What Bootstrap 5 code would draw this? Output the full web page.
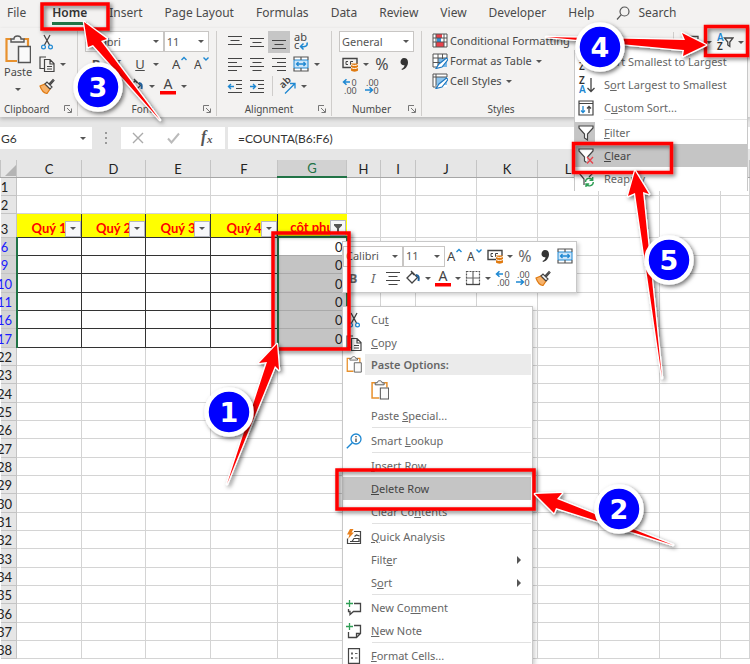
<!DOCTYPE html>
<html lang="en">
<head>
<meta charset="utf-8">
<meta name="viewport" content="width=device-width, initial-scale=1">
<title>Spreadsheet – delete filtered rows</title>
<link href="https://cdn.jsdelivr.net/npm/bootstrap@5.3.0/dist/css/bootstrap.min.css" rel="stylesheet">
<style>
  body { font-family: "Noto Sans", "Open Sans", sans-serif; font-size: 11px; line-height: 16px; color: #4a4a4a; background: #fff; }
  .app { min-height: 100vh; overflow: hidden; }
  svg { display: block; fill: none; flex: none; }
  button { font: inherit; color: inherit; background: none; border: 0; padding: 0; }

  /* ribbon */
  .ribbon { background: #f3f2f1; }
  .tabs { height: 28px; gap: 22px; padding: 0 7px; font-size: 12px; }
  .tabs a { color: #4a4a4a; text-decoration: none; line-height: 20px; padding-top: 3px; }
  .tabs a.active { font-weight: 600; color: #333; border-bottom: 3px solid #217346; line-height: 19px; }
  .groups { height: 89px; padding-top: 3px; box-shadow: 0 2px 4px #00000038; }
  .grp { border-right: 1px solid #cfcdcb; padding: 0 7px; margin-bottom: 1px; }
  .grp .line { height: 22px; }
  .grp .cap { margin-top: auto; font-size: 10px; line-height: 14px; }
  .grp .cap.text-center { padding-right: 10px; }
  .g-clip { width: 78px; padding: 0; } .g-font { width: 139px; } .g-align { width: 115px; }
  .g-num { width: 90px; } .g-style { width: 166px; padding-left: 10px; } .g-edit { padding-left: 85px; border: 0; }
  .grp.g-style .line { height: 20px; gap: 2px; }
  .ib { width: 22px; height: 22px; display: flex; align-items: center; justify-content: center; flex: none; }
  .ib.on { background: #c6c6c6; }
  .car { width: 10px; display: flex; justify-content: center; flex: none; }
  .car::after, .fbtn::after { content: ""; border: 3px solid transparent; border-top-color: #555; border-bottom: 0; }
  .vsep { width: 1px; height: 20px; background: #cfcdcb; margin: 0 4px; }
  .combo { --bs-form-select-bg-img: url("data:image/svg+xml,%3Csvg xmlns='http://www.w3.org/2000/svg' viewBox='0 0 6 3'%3E%3Cpath d='M0 0h6L3 3z' fill='%23555'/%3E%3C/svg%3E");
    height: 21px; border-radius: 0; border-color: #c8c6c4; padding: 0 12px 0 2px; font-size: 11px; line-height: 18px;
    background-size: 6px 3px; background-position: right 4px center; color: #555; }
  .letter { font-size: 13px; }
  .dialog { position: absolute; right: 5px; bottom: 3px; }

  /* formula bar */
  .fbar { background: #e6e6e6; padding: 10px 0 11px; font-family: Lato, sans-serif; }
  .fbar > div, .fbar input { background: #fff; height: 22px; border: 0; color: #333; }
  .fbar input { font-size: 12px; }
  .fbar .formula { padding-left: 10px; }
  .namebox { width: 92px; } .namebox input { width: 78px; padding: 0 0 0 1px; }
  .fbar .dots { width: 29px; background: none; color: #999; }
  .fx { width: 104px; margin-right: 3px; }
  .fx button { width: 35px; }

  /* grid */
  .sheet { table-layout: fixed; width: 100%; border-collapse: collapse; font-family: Lato, sans-serif; font-size: 12px; line-height: 16px; color: #222; }
  .sheet td, .sheet th { border: 1px solid #d4d4d4; padding: 0; height: 18px; font-weight: 400; position: relative; vertical-align: bottom; }
  .sheet tbody tr:nth-child(3n) > * { height: 19px; }
  .sheet thead th { background: #e6e6e6; height: 17px; border-top: 0; border-color: #c4c4c4; border-bottom-color: #a6a6a6; text-align: center; font-size: 13px; }
  .sheet thead th.sel { background: #d2d2d2; color: #217346; border-bottom: 2px solid #217346; }
  .sheet tbody th { background: #e6e6e6; text-align: center; padding-right: 8px; border-left: 0; border-color: #c4c4c4; font-size: 13px; white-space: nowrap; }
  .sheet tbody th span { display: block; width: 16px; margin-left: -4px; text-align: center; padding-top: 1px; }
  .sheet tbody th.sel { background: #d4d4d4; color: #1a1aff; border-right: 2px solid #217346; }
  .sheet tr.titles > * { height: 24px !important; }
  .sheet td.ttl { background: #ff0; color: #f00; font-weight: 700; text-align: center; border-color: #333; font-size: 13px; padding-bottom: 1px; white-space: nowrap; }
  .sheet td.ttl.free { border-color: #ff0; }
  .sheet td.box { border-color: #333; }
  .sheet td.val { text-align: right; padding: 1px 3px 0 0; border-color: #a9a9a9; border-left: 2px solid #217346; border-right: 2px solid #217346; background: #c4c4c4; font-size: 13px; }
  .sheet td.val.first { background: #fff; border-top: 2px solid #217346; }
  .fbtn { position: absolute; right: 0; bottom: 0; width: 16px; height: 16px; background: #f7f8fa !important; border: 1px solid #b5b8c0 !important; display: flex; align-items: center; justify-content: center; }
  .fbtn.filtered::after { display: none; }

  /* floating layers */
  .float { position: absolute; background: #fff; border: 1px solid #c8c8c8; box-shadow: 2px 2px 4px #00000030; color: #666; }
  .mini { left: 342px; top: 241px; width: 235px; padding: 3px 0; }
  .mini .ib { width: 20px; }
  .ctx { left: 342px; top: 306px; width: 191px; height: calc(100% - 306px); min-height: 358px; border-bottom: 0; padding: 1px 1px 0 0; overflow: hidden; }
  .sortm { left: 574px; top: 50px; width: 174px; border-width: 0 1px; box-shadow: none; padding-bottom: 1px; }
  .mi { display: flex; align-items: center; height: 23px; width: 100%; text-align: left; }
  .mi .ic { width: 28px; flex: none; padding-left: 3px; }
  .mi.hot { background: #c5c5c5; color: #444; }
  .mi.head { height: 21px; font-weight: 600; }
  .mi.head .ttx { background: #ebebeb; margin-left: -6px; padding-left: 6px; flex: 1; line-height: 21px; }
  .mi.tall { height: 29px; }
  .sortm .mi .ic { width: 29px; }
  .sortm .ic.on { background: #c5c5c5; width: 20px; margin-right: 9px; height: 21px; display: flex; align-items: center; }
  .msep { height: 1px; margin: 0 0 1px 29px; background: #e1e1e1; }
  .sub { margin-left: auto; margin-right: 10px; border: 4px solid transparent; border-left-color: #555; border-right: 0; }

  .notes { position: absolute; left: 0; top: 0; pointer-events: none; }
  .notes text { font: 700 27px "DejaVu Sans", sans-serif; fill: #fff; text-anchor: middle; }
  .arrows { paint-order: stroke; }
</style>
<script src="https://cdn.jsdelivr.net/npm/bootstrap@5.3.0/dist/js/bootstrap.bundle.min.js"></script>
</head>
<body>
<svg width="0" height="0" class="position-absolute" aria-hidden="true">
  <defs>
    <symbol id="cut" viewBox="0 0 16 16"><path d="M5 1l5.500 10M11 1L5.500 11" stroke="#444" stroke-width="1.300"/><circle cx="4.500" cy="13" r="1.900" stroke="#1e88d2" stroke-width="1.200"/><circle cx="11.500" cy="13" r="1.900" stroke="#1e88d2" stroke-width="1.200"/></symbol>
    <symbol id="copy" viewBox="0 0 16 16"><path d="M5 12.500H1V1h6M5.500 3.500h5.500l4 4v8H5.500zM11 3.500V8h4M8 10.500h5M8 13h5" stroke="#444" stroke-width="1.200"/></symbol>
    <symbol id="paste" viewBox="0 0 26 29"><path d="M6 4H1.500v22H12M19 4h4v7" stroke="#e8912d" stroke-width="2.200"/><path d="M6 7V4h3c0-4 7-4 7 0h3v3z" fill="#f3f2f1" stroke="#555" stroke-width="1.400"/><path d="M13.500 11.500h12v16h-12z" fill="#fafafa" stroke="#555" stroke-width="1.500"/></symbol>
    <symbol id="paint" viewBox="0 0 16 16"><path d="M1 8l5-2 5 5-3 4.500c-3-.5-5.500-3-7-7.500z" fill="#f6b26b" stroke="#e07a10" stroke-width="1.200"/><path d="M6 6l2-2 5 5-2 2zM10 6l4-4.500 1 1L11 7" fill="#fff" stroke="#444" stroke-width="1.200"/></symbol>
    <symbol id="atop" viewBox="0 0 16 16"><path d="M1 2.500h14M3.500 6.500h9M1 10.500h14" stroke="#444" stroke-width="1.200"/></symbol>
    <symbol id="amid" viewBox="0 0 16 16"><path d="M1 4.500h14M3.500 8.500h9M1 12.500h14" stroke="#444" stroke-width="1.200"/></symbol>
    <symbol id="abot" viewBox="0 0 16 16"><path d="M1 6.500h14M3.500 10.500h9M1 14.500h14" stroke="#444" stroke-width="1.200"/></symbol>
    <symbol id="left" viewBox="0 0 16 16"><path d="M1 2.500h14M1 6.500h9M1 10.500h14M1 14.500h9" stroke="#444" stroke-width="1.200"/></symbol>
    <symbol id="center" viewBox="0 0 16 16"><path d="M1 2.500h14M3.500 6.500h9M1 10.500h14M3.500 14.500h9" stroke="#444" stroke-width="1.200"/></symbol>
    <symbol id="right" viewBox="0 0 16 16"><path d="M1 2.500h14M6 6.500h9M1 10.500h14M6 14.500h9" stroke="#444" stroke-width="1.200"/></symbol>
    <symbol id="outd" viewBox="0 0 16 16"><path d="M1 2.500h14M9 6.500h6M9 10.500h6M1 14.500h14" stroke="#444" stroke-width="1.200"/><path d="M7 8.500H1.500M4 6L1.500 8.500 4 11" stroke="#1e88d2" stroke-width="1.400"/></symbol>
    <symbol id="ind" viewBox="0 0 16 16"><path d="M1 2.500h14M9 6.500h6M9 10.500h6M1 14.500h14" stroke="#444" stroke-width="1.200"/><path d="M1 8.500h5.500M4 6l2.500 2.500L4 11" stroke="#1e88d2" stroke-width="1.400"/></symbol>
    <symbol id="wrap" viewBox="0 0 16 18"><text x="1" y="8" font-size="11" fill="#444">ab</text><text x="1" y="16" font-size="11" fill="#444">c</text><path d="M14 9.500c1 4-2 4.500-6 4M10.500 10.500L7.500 13.500l3 3" stroke="#1e88d2" stroke-width="1.500"/></symbol>
    <symbol id="merge" viewBox="0 0 16 16"><path d="M1 1h14v14H1z" fill="#fff"/><path d="M1 4h14v8H1z" fill="#cfe6f8" stroke="#1e88d2"/><path d="M1 4V1h14v3M1 12v3h14v-3M8 1v3M8 12v3" stroke="#555" stroke-width="1.200"/><path d="M3.500 8h9M5.500 6l-2 2 2 2M10.500 6l2 2-2 2" stroke="#1e88d2" stroke-width="1.300"/></symbol>
    <symbol id="orient" viewBox="0 0 18 16"><text transform="rotate(-45 4 11)" x="4" y="11" font-size="10" fill="#444" style="font-weight:600">ab</text><path d="M6 15.500L15.500 6M11 5.500h5v5" stroke="#1e88d2" stroke-width="1.300"/></symbol>
    <symbol id="money" viewBox="0 0 17 16"><path d="M1 2.500h14v9H1z" stroke="#444" stroke-width="1.400"/><path d="M6 5.500H4v3h2M11 5.500H8.500v3h2" stroke="#444"/><path d="M9 7.500h7v7c-1 1.500-6 1.500-7 0z" fill="#e07a10"/><path d="M9 8.500c1.500 1.300 5.500 1.300 7 0M9 11.500c1.500 1.300 5.500 1.300 7 0" stroke="#fff"/></symbol>
    <symbol id="comma" viewBox="0 0 10 14"><path d="M5 1c2.500 0 4 1.600 4 4.200C9 9 6.500 12 3 13l-.5-1c2-1 3-2.500 3-3.800C3 8.500 1.500 7 1.500 5S3 1 5 1z" fill="#333"/></symbol>
    <symbol id="dec0" viewBox="0 0 16 16"><path d="M8 4H1.500M4.500 1.200L1.500 4l3 2.800" stroke="#1e88d2" stroke-width="1.500"/><text x="9.500" y="8" font-size="9" fill="#555">0</text><text x="2" y="15.500" font-size="9" fill="#555">.00</text></symbol>
    <symbol id="dec1" viewBox="0 0 16 16"><text x="2" y="8" font-size="9" fill="#555">.00</text><text x="9.500" y="15.500" font-size="9" fill="#555">0</text><path d="M1 12h7M5.500 9.200l3 2.800-3 2.800" stroke="#1e88d2" stroke-width="1.500"/></symbol>
    <symbol id="cf" viewBox="0 0 16 16"><path d="M1 1h14v13H1z" fill="#fff"/><path d="M4 1h6v4H4zM4 9h8v5H4z" fill="#e8414b"/><path d="M5 5h4v4H5z" fill="#2f8fd8"/><path d="M1 1h14v13H1zM4 1v13M12 1v13M1 5h14M1 9h14" stroke="#555"/></symbol>
    <symbol id="ft" viewBox="0 0 16 16"><path d="M1 1h14v13H1z" fill="#fff"/><path d="M6 5h9v9H6z" fill="#7ab8e8"/><path d="M15 1H1v13h4M6 1v13M10.500 1v5M1 5h14M1 9.500h9M15 1v4" stroke="#555"/><path d="M4 15.500l3-4.500 7.500-6 1.500 1.500-6 7.500z" fill="#fff" stroke="#1e78c0" stroke-width="1.200"/></symbol>
    <symbol id="cs" viewBox="0 0 16 16"><path d="M1 1h14v13H1z" fill="#fff"/><path d="M4 4h11v8H4z" fill="#8cc4ee"/><path d="M15 4V1H1v13h4M4 1v12M1 4h14" stroke="#555"/><path d="M4 15.500l3-4.500 7.500-6 1.500 1.500-6 7.500z" fill="#fff" stroke="#1e78c0" stroke-width="1.200"/></symbol>
    <symbol id="bucket" viewBox="0 0 16 16"><path d="M2 8l5.500-5.500 5 5L7 13zM6 1l3 4" stroke="#444" stroke-width="1.300"/><path d="M11 5c3 0 3 3 2.500 6" stroke="#1e5f9a" stroke-width="2"/></symbol>
    <symbol id="fontc" viewBox="0 0 16 18"><text x="8" y="11.500" font-size="14" text-anchor="middle" fill="#444">A</text><path d="M0 14h16v3.500H0z" fill="#f00"/></symbol>
    <symbol id="big" viewBox="0 0 16 16"><text x="0" y="13" font-size="13" fill="#444">A</text><path d="M9.500 4l2.500-2.500L14.500 4" stroke="#1e88d2" stroke-width="1.400"/></symbol>
    <symbol id="small-a" viewBox="0 0 16 16"><text x="0" y="13" font-size="12" fill="#444">A</text><path d="M9.500 1.500L12 4l2.500-2.500" stroke="#1e88d2" stroke-width="1.400"/></symbol>
    <symbol id="bord" viewBox="0 0 16 16"><path d="M1.500 1.500h13v13h-13z" stroke="#555" stroke-width="1.200" stroke-dasharray="2 1"/><path d="M8 1v14M1 8h14" stroke="#666" stroke-width="1.200"/><path d="M1 14.500h14" stroke="#444" stroke-width="1.300"/></symbol>
    <symbol id="launch" viewBox="0 0 8 8"><path d="M.5 6V.5H6M3 3l4 4M7.500 3.500v4h-4" stroke="#777"/></symbol>
    <symbol id="za" viewBox="0 0 18 18"><text x="1" y="8" font-size="10" fill="#333" style="font-weight:600">Z</text><text x="1" y="17" font-size="10" fill="#1e88d2" style="font-weight:600">A</text><path d="M13 2v13M9.500 12l3.500 3.500 3.500-3.500" stroke="#444" stroke-width="1.300"/></symbol>
    <symbol id="az" viewBox="0 0 18 18"><text x="1" y="8" font-size="10" fill="#1e88d2" style="font-weight:600">A</text><text x="1" y="17" font-size="10" fill="#333" style="font-weight:600">Z</text><path d="M13 2v13M9.500 12l3.500 3.500 3.500-3.500" stroke="#444" stroke-width="1.300"/></symbol>
    <symbol id="azf" viewBox="0 0 18 18"><text x="1" y="8" font-size="10" fill="#1e88d2" style="font-weight:600">A</text><text x="1" y="17" font-size="10" fill="#333" style="font-weight:600">Z</text><path d="M8.500 5h8.500l-3.200 4v4.500l-2-1.500V9z" stroke="#444" stroke-width="1.300"/></symbol>
    <symbol id="csort" viewBox="0 0 16 16"><path d="M1 1h14v14H1zM1 3.500h14" stroke="#444" stroke-width="1.200"/><path d="M5 6v6.500M3 10.500l2 2 2-2" stroke="#1e88d2" stroke-width="1.300"/><path d="M11 13V6.500M9 8.500l2-2 2 2" stroke="#444" stroke-width="1.300"/></symbol>
    <symbol id="funnel" viewBox="0 0 16 16"><path d="M1 1h14v2L9.500 9v6l-3-2V9L1 3z" fill="#fff" stroke="#444" stroke-width="1.200"/></symbol>
    <symbol id="fclear" viewBox="0 0 16 16"><path d="M9.500 9L15 3V1H1v2l5.500 6v4l2 1.500" fill="#fff" stroke="#444" stroke-width="1.200"/><path d="M9 9l6 6.500M15 9l-6 6.500" stroke="#e8414b" stroke-width="1.300"/></symbol>
    <symbol id="freap" viewBox="0 0 16 16"><path d="M11 6l4-4V1H1v1l5 6v6" stroke="#444" stroke-width="1.200"/><path d="M7.500 11c0-4 5-5 7-2M14.700 6v3.300h-3.200M15.300 11c0 4-5 5-7 2.500M8 16.500V13h3.200" stroke="#2f9e55" stroke-width="1.400"/></symbol>
    <symbol id="look" viewBox="0 0 16 16"><circle cx="10" cy="6" r="5" stroke="#1e88d2" stroke-width="1.300"/><path d="M6.300 9.700L.8 15.200" stroke="#1e88d2" stroke-width="1.400"/><path d="M10 5.500V9M10 3v1.200" stroke="#444" stroke-width="1.300"/></symbol>
    <symbol id="quick" viewBox="0 0 16 16"><path d="M8 2.500h6.500v12h-13v-5M4 12.500h9v-3H8l-2 3M8.500 7.500l2-1.500 3 1" stroke="#444" stroke-width="1.200"/><path d="M4 0h3.500L5.500 3.500H8L2 10l1.500-4.500H1z" fill="#e8801d"/></symbol>
    <symbol id="comm" viewBox="0 0 16 16"><path d="M8 3.500h6.500v8H7.500L4 14.500v-3H2.500V9" stroke="#444" stroke-width="1.300"/><path d="M3.500 0v7M0 3.500h7" stroke="#2f9e55" stroke-width="1.300"/></symbol>
    <symbol id="note" viewBox="0 0 16 16"><path d="M8 2.500h6.500v8l-4 4h-8V9M14.500 10.500h-4v4" stroke="#444" stroke-width="1.300"/><path d="M3.500 0v7M0 3.500h7" stroke="#2f9e55" stroke-width="1.300"/></symbol>
    <symbol id="fmt" viewBox="0 0 16 16"><path d="M2.500.7h11v14.600h-11z" stroke="#444" stroke-width="1.200"/><path d="M5 4.500h2v2H5zM5 9h2v2H5z" fill="#666"/><path d="M9 5.500h2.500M9 10h2.500" stroke="#666" stroke-width="1.200"/></symbol>
  </defs>
</svg>

<main class="app position-relative">
  <header class="ribbon">
    <nav class="tabs d-flex align-items-start text-nowrap" aria-label="Ribbon tabs">
      <a href="#" class="me-1">File</a><a href="#" class="active">Home</a><a href="#">Insert</a><a href="#">Page Layout</a><a href="#">Formulas</a><a href="#">Data</a><a href="#">Review</a><a href="#">View</a><a href="#">Developer</a><a href="#">Help</a>
      <a href="#" class="d-flex align-items-center gap-2"><svg width="14" height="14" viewBox="0 0 14 14"><circle cx="8.500" cy="5.500" r="4.500" stroke="#555" stroke-width="1.200"/><path d="M5.300 8.700L1 13.500" stroke="#555" stroke-width="1.200"/></svg>Search</a>
    </nav>
    <div class="groups d-flex position-relative">
      <section class="grp g-clip d-flex flex-column position-relative flex-shrink-0">
        <div class="d-flex">
          <button class="d-flex flex-column align-items-center pt-1 ps-1 me-1" type="button"><svg width="26" height="29"><use href="#paste"/></svg><span>Paste</span><span class="car pt-2"></span></button>
          <div>
            <div class="line d-flex align-items-center"><button class="ib" type="button" aria-label="Cut"><svg width="16" height="16"><use href="#cut"/></svg></button></div>
            <div class="line d-flex align-items-center"><button class="ib" type="button" aria-label="Copy"><svg width="16" height="16"><use href="#copy"/></svg></button><span class="car"></span></div>
            <div class="line d-flex align-items-center"><button class="ib" type="button" aria-label="Format Painter"><svg width="16" height="16"><use href="#paint"/></svg></button></div>
          </div>
        </div>
        <div class="cap ps-1">Clipboard</div><svg class="dialog" width="8" height="8"><use href="#launch"/></svg>
      </section>
      <section class="grp g-font d-flex flex-column position-relative flex-shrink-0">
        <div class="line d-flex"><select class="form-select combo" style="width:80px" aria-label="Font"><option>Calibri</option></select><select class="form-select combo" style="width:46px" aria-label="Font size"><option>11</option></select></div>
        <div class="line d-flex align-items-center letter"><button class="ib fw-bold" type="button">B</button><button class="ib fst-italic" type="button">I</button><button class="ib text-decoration-underline" type="button">U</button><span class="car"></span><span class="vsep"></span><button class="ib" type="button" aria-label="Increase font size"><svg width="16" height="16"><use href="#big"/></svg></button><button class="ib" type="button" aria-label="Decrease font size"><svg width="16" height="16"><use href="#small-a"/></svg></button></div>
        <div class="line d-flex align-items-center"><button class="ib" type="button" aria-label="Borders"><svg width="16" height="16"><use href="#bord"/></svg></button><span class="car"></span><button class="ib ms-2" type="button" aria-label="Fill colour"><svg width="16" height="16"><use href="#bucket"/></svg></button><span class="car"></span><button class="ib" type="button" aria-label="Font colour"><svg width="16" height="18"><use href="#fontc"/></svg></button><span class="car"></span></div>
        <div class="cap text-center">Font</div><svg class="dialog" width="8" height="8"><use href="#launch"/></svg>
      </section>
      <section class="grp g-align d-flex flex-column position-relative flex-shrink-0">
        <div class="line d-flex align-items-center"><button class="ib" type="button" aria-label="Top align"><svg width="16" height="16"><use href="#atop"/></svg></button><button class="ib" type="button" aria-label="Middle align"><svg width="16" height="16"><use href="#amid"/></svg></button><button class="ib on" type="button" aria-label="Bottom align"><svg width="16" height="16"><use href="#abot"/></svg></button><button class="ib" type="button" aria-label="Wrap text"><svg width="16" height="18"><use href="#wrap"/></svg></button></div>
        <div class="line d-flex align-items-center"><button class="ib" type="button" aria-label="Align left"><svg width="16" height="16"><use href="#left"/></svg></button><button class="ib" type="button" aria-label="Center"><svg width="16" height="16"><use href="#center"/></svg></button><button class="ib" type="button" aria-label="Align right"><svg width="16" height="16"><use href="#right"/></svg></button><button class="ib" type="button" aria-label="Merge and center"><svg width="16" height="16"><use href="#merge"/></svg></button><span class="car"></span></div>
        <div class="line d-flex align-items-center"><button class="ib" type="button" aria-label="Decrease indent"><svg width="16" height="16"><use href="#outd"/></svg></button><button class="ib" type="button" aria-label="Increase indent"><svg width="16" height="16"><use href="#ind"/></svg></button><span class="vsep"></span><button class="ib" type="button" aria-label="Orientation"><svg width="18" height="16"><use href="#orient"/></svg></button><span class="car"></span></div>
        <div class="cap text-center">Alignment</div><svg class="dialog" width="8" height="8"><use href="#launch"/></svg>
      </section>
      <section class="grp g-num d-flex flex-column position-relative flex-shrink-0">
        <div class="line d-flex"><select class="form-select combo" aria-label="Number format"><option>General</option></select></div>
        <div class="line d-flex align-items-center"><button class="ib" type="button" aria-label="Accounting format"><svg width="17" height="16"><use href="#money"/></svg></button><span class="car"></span><button class="ib fs-6" type="button">%</button><button class="ib" type="button" aria-label="Comma style"><svg width="10" height="14"><use href="#comma"/></svg></button></div>
        <div class="line d-flex align-items-center"><button class="ib" type="button" aria-label="Increase decimal"><svg width="16" height="16"><use href="#dec0"/></svg></button><button class="ib" type="button" aria-label="Decrease decimal"><svg width="16" height="16"><use href="#dec1"/></svg></button></div>
        <div class="cap text-center">Number</div><svg class="dialog" width="8" height="8"><use href="#launch"/></svg>
      </section>
      <section class="grp g-style d-flex flex-column flex-shrink-0">
        <button class="line d-flex align-items-center text-nowrap" type="button"><svg width="16" height="16"><use href="#cf"/></svg>Conditional Formatting<span class="car"></span></button>
        <button class="line d-flex align-items-center text-nowrap" type="button"><svg width="16" height="16"><use href="#ft"/></svg><span>Format as Table</span><span class="car"></span></button>
        <button class="line d-flex align-items-center text-nowrap" type="button"><svg width="16" height="16"><use href="#cs"/></svg><span>Cell Styles</span><span class="car"></span></button>
        <div class="cap text-center">Styles</div>
      </section>
      <section class="grp g-edit flex-grow-1">
        <div class="line d-flex align-items-center"><span class="vsep m-0 me-2"></span><button class="ib" type="button" aria-label="AutoSum"><svg width="14" height="15" viewBox="0 0 14 15"><path d="M12 4V1.500H1.500L7 7.500l-5.500 6H12V11" stroke="#444" stroke-width="1.300"/></svg></button><span class="car"></span><button class="ib" type="button" aria-label="Sort and filter"><svg width="18" height="18"><use href="#azf"/></svg></button><span class="car"></span></div>
      </section>
    </div>
  </header>

  <div class="fbar d-flex">
    <div class="namebox d-flex align-items-center"><input type="text" value="G6" aria-label="Name box"><span class="car"></span></div>
    <div class="dots d-flex align-items-center justify-content-center"><svg width="3" height="12" viewBox="0 0 3 12"><path d="M0 0h2v2H0zM0 5h2v2H0zM0 10h2v2H0z" fill="#999"/></svg></div>
    <div class="fx d-flex align-items-center">
      <button class="d-flex justify-content-center" type="button" aria-label="Cancel"><svg width="12" height="12" viewBox="0 0 12 12"><path d="M1 1l10 10M11 1L1 11" stroke="#aaa" stroke-width="1.400"/></svg></button>
      <button class="d-flex justify-content-center" type="button" aria-label="Enter"><svg width="13" height="12" viewBox="0 0 13 12"><path d="M1 6.500l3.500 4L12 1.500" stroke="#bbb" stroke-width="2"/></svg></button>
      <button type="button" aria-label="Insert function"><svg class="mx-auto" width="16" height="18" viewBox="0 0 16 18"><text x="1" y="13" font-family="Liberation Serif, serif" font-size="16" font-style="italic" font-weight="700" fill="#555">f</text><text x="7" y="14" font-family="Liberation Serif, serif" font-size="11" font-style="italic" font-weight="700" fill="#555">x</text></svg></button>
    </div>
    <input class="formula flex-grow-1" type="text" value="=COUNTA(B6:F6)" aria-label="Formula">
  </div>

  <table class="sheet">
    <colgroup><col style="width:16px"><col style="width:65px"><col style="width:64px"><col style="width:65px"><col style="width:67px"><col style="width:69px"><col style="width:34px"><col style="width:35px"><col style="width:61px"><col style="width:61px"><col style="width:61px"><col style="width:61px"><col style="width:61px"><col></colgroup>
    <thead><tr><th><svg width="12" height="12" viewBox="0 0 12 12" class="ms-1"><path d="M11 0v11H0z" fill="#b4b4b4"/></svg></th><th>C</th><th>D</th><th>E</th><th>F</th><th class="sel">G</th><th>H</th><th>I</th><th>J</th><th>K</th><th>L</th><th>M</th><th>N</th><th>O</th></tr></thead>
    <tbody id="rows"></tbody>
  </table>

  <div class="float mini">
    <div class="d-flex align-items-center"><select class="form-select combo" style="width:60px" aria-label="Font"><option>Calibri</option></select><select class="form-select combo" style="width:42px" aria-label="Font size"><option>11</option></select><button class="ib" type="button" aria-label="Increase font size"><svg width="16" height="16"><use href="#big"/></svg></button><button class="ib" type="button" aria-label="Decrease font size"><svg width="16" height="16"><use href="#small-a"/></svg></button><button class="ib" type="button" aria-label="Accounting format"><svg width="17" height="16"><use href="#money"/></svg></button><span class="car"></span><button class="ib fs-6" type="button">%</button><button class="ib" type="button" aria-label="Comma style"><svg width="10" height="14"><use href="#comma"/></svg></button><button class="ib" type="button" aria-label="Merge and center"><svg width="16" height="16"><use href="#merge"/></svg></button></div>
    <div class="d-flex align-items-center letter"><button class="ib fw-bold" type="button">B</button><button class="ib fst-italic" type="button">I</button><button class="ib" type="button" aria-label="Center"><svg width="16" height="16"><use href="#center"/></svg></button><button class="ib" type="button" aria-label="Fill colour"><svg width="16" height="16"><use href="#bucket"/></svg></button><span class="car"></span><button class="ib" type="button" aria-label="Font colour"><svg width="16" height="18"><use href="#fontc"/></svg></button><span class="car"></span><button class="ib" type="button" aria-label="Borders"><svg width="16" height="16"><use href="#bord"/></svg></button><span class="car"></span><button class="ib" type="button" aria-label="Increase decimal"><svg width="16" height="16"><use href="#dec0"/></svg></button><button class="ib" type="button" aria-label="Decrease decimal"><svg width="16" height="16"><use href="#dec1"/></svg></button><button class="ib" type="button" aria-label="Format Painter"><svg width="16" height="16"><use href="#paint"/></svg></button></div>
  </div>

  <div class="float ctx">
    <button class="mi" type="button"><span class="ic"><svg width="16" height="16"><use href="#cut"/></svg></span><span>Cu<u>t</u></span></button>
    <button class="mi" type="button"><span class="ic"><svg width="16" height="16"><use href="#copy"/></svg></span><span><u>C</u>opy</span></button>
    <div class="mi head"><span class="ic"><svg width="16" height="17"><use href="#paste"/></svg></span><span class="ttx">Paste Options:</span></div>
    <button class="mi tall" type="button" aria-label="Paste"><span class="ic"></span><svg width="18" height="20"><use href="#paste"/></svg></button>
    <button class="mi" type="button"><span class="ic"></span><span>Paste <u>S</u>pecial...</span></button>
    <div class="msep"></div>
    <button class="mi" type="button"><span class="ic"><svg width="16" height="16"><use href="#look"/></svg></span><span>Smart <u>L</u>ookup</span></button>
    <div class="msep"></div>
    <button class="mi" type="button"><span class="ic"></span><span><u>I</u>nsert Row</span></button>
    <button class="mi hot" type="button"><span class="ic"></span><span><u>D</u>elete Row</span></button>
    <button class="mi" type="button"><span class="ic"></span><span>Clear Co<u>n</u>tents</span></button>
    <div class="msep"></div>
    <button class="mi" type="button"><span class="ic"><svg width="16" height="16"><use href="#quick"/></svg></span><span><u>Q</u>uick Analysis</span></button>
    <button class="mi" type="button"><span class="ic"></span><span>Filt<u>e</u>r</span><span class="sub"></span></button>
    <button class="mi" type="button"><span class="ic"></span><span>S<u>o</u>rt</span><span class="sub"></span></button>
    <div class="msep"></div>
    <button class="mi" type="button"><span class="ic"><svg width="16" height="16"><use href="#comm"/></svg></span><span>New Co<u>m</u>ment</span></button>
    <button class="mi" type="button"><span class="ic"><svg width="16" height="16"><use href="#note"/></svg></span><span><u>N</u>ew Note</span></button>
    <div class="msep"></div>
    <button class="mi" type="button"><span class="ic"><svg width="16" height="16"><use href="#fmt"/></svg></span><span><u>F</u>ormat Cells...</span></button>
  </div>

  <div class="float sortm">
    <button class="mi" type="button"><span class="ic"><svg width="18" height="18"><use href="#az"/></svg></span><span><u>S</u>ort Smallest to Largest</span></button>
    <button class="mi" type="button"><span class="ic"><svg width="18" height="18"><use href="#za"/></svg></span><span>S<u>o</u>rt Largest to Smallest</span></button>
    <button class="mi" type="button"><span class="ic"><svg width="16" height="16"><use href="#csort"/></svg></span><span>C<u>u</u>stom Sort...</span></button>
    <div class="msep"></div>
    <button class="mi" type="button"><span class="ic on"><svg width="16" height="16"><use href="#funnel"/></svg></span><span><u>F</u>ilter</span></button>
    <button class="mi hot" type="button"><span class="ic"><svg width="16" height="16"><use href="#fclear"/></svg></span><span><u>C</u>lear</span></button>
    <button class="mi" type="button"><span class="ic"><svg width="16" height="16"><use href="#freap"/></svg></span><span>Reapp<u>l</u>y</span></button>
  </div>

  <svg class="notes" width="750" height="664" viewBox="0 0 750 664" role="img" aria-label="Steps 1 to 5">
    <defs><filter id="sh" x="-20%" y="-20%" width="150%" height="150%"><feDropShadow dx="2" dy="2" stdDeviation="2" flood-color="#000" flood-opacity=".55"/></filter></defs>
    <g stroke="#f00" stroke-width="3.500" filter="url(#sh)">
      <path d="M42 4h66v25H42zM705.500 26.500h42v29h-42zM573.500 143.500h98v29h-98zM273 233h76v116h-76zM337 470h197v39H337z"/>
    </g>
    <g class="arrows" fill="#f00" stroke="#fff" stroke-width="2.500" stroke-linejoin="round" filter="url(#sh)">
      <path d="M277 344L259 363 267 362 227 484 275 366 279 370z"/>
      <path d="M535 494L562 493 557 499 673 545 556 508 554 513z"/>
      <path d="M84 22L88 47 93 45 160 120 101 41 107 39z"/>
      <path d="M706 45L682 33 685 40 546 37 684 50 683 56z"/>
      <path d="M635 171L628 196 635 193 662 378 643 192 649 194z"/>
    </g>
    <g fill="#00f" stroke="#fff" stroke-width="4.500" filter="url(#sh)">
      <circle cx="229" cy="412" r="22.500"/><circle cx="619" cy="509" r="22.500"/><circle cx="98" cy="87" r="22.500"/><circle cx="600" cy="47" r="22.500"/><circle cx="669" cy="260" r="22.500"/>
    </g>
    <text x="229" y="422">1</text><text x="619" y="519">2</text><text x="98" y="97">3</text><text x="600" y="57">4</text><text x="669" y="270">5</text>
  </svg>
</main>
<script>
  // Sheet rows: filtered data rows 6-17 sit between blank rows.
  const body = document.getElementById('rows');
  const td = (n, cls = '') => `<td class="${cls}"></td>`.repeat(n);
  const btn = f => `<button class="fbtn ${f ? 'filtered' : ''}" type="button" aria-label="Filter">${f ? '<svg width="10" height="10" viewBox="0 0 10 10"><path d="M1 1h8v1.500L6 5.500V9H4V5.500L1 2.500z" fill="#555"/></svg>' : ''}</button>`;
  const head = (n, cls = '') => `<th class="${cls}" scope="row"><span>${n}</span></th>`;
  let html = '';
  for (const n of [1, 2]) html += `<tr>${head(n)}${td(13)}</tr>`;
  html += `<tr class="titles">${head(3)}${['Quý 1', 'Quý 2', 'Quý 3', 'Quý 4'].map(t => `<td class="ttl">${t}${btn(false)}</td>`).join('')}<td class="ttl free">cột phụ${btn(true)}</td>${td(8)}</tr>`;
  [6, 9, 10, 11, 16, 17].forEach((n, i) => html += `<tr>${head(n, 'sel')}${td(4, 'box')}<td class="val ${i ? '' : 'first'}">0</td>${td(8)}</tr>`);
  for (let n = 22; n <= 38; n++) html += `<tr>${head(n)}${td(13)}</tr>`;
  body.innerHTML = html;
</script>
</body>
</html>
